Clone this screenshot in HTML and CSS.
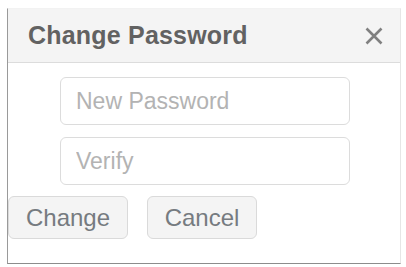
FILE: index.html
```html
<!DOCTYPE html>
<html>
<head>
<meta charset="utf-8">
<link rel="stylesheet" href="styles.css">
</head>
<body>
<div class="dialog">
  <div class="header">
    <span class="title">Change Password</span>
    <span class="close" aria-label="close">
      <svg width="18" height="18" viewBox="0 0 18 18"><path d="M1.5 1.5 L16.5 16.5 M16.5 1.5 L1.5 16.5" stroke="#808080" stroke-width="2.6" stroke-linecap="butt" fill="none"/></svg>
    </span>
  </div>
  <div class="body">
    <div class="fields">
      <input class="field" type="password" placeholder="New Password">
      <input class="field" type="password" placeholder="Verify">
    </div>
    <div class="actions">
      <button class="btn btn-change">Change</button>
      <button class="btn btn-cancel">Cancel</button>
    </div>
  </div>
</div>
</body>
</html>
```
FILE: styles.css
```css
html, body {
  margin: 0;
  padding: 0;
  background: #fff;
}
body {
  font-family: "Liberation Sans", Arial, sans-serif;
  padding: 8px 0 0 7px;
}
.dialog {
  width: 392px;
  border-left: 1px solid #9a9a9a;
  border-right: 1px solid #e6e6e6;
  border-top: 1px solid #f2f2f2;
  border-bottom: 1px solid #8c8c8c;
  background: #fff;
}
.header {
  height: 53px;
  background: #f4f4f4;
  border-bottom: 1px solid #dcdcdc;
  display: flex;
  align-items: center;
  justify-content: space-between;
  padding: 0 17px 0 20px;
}
.title {
  font-size: 25px;
  font-weight: bold;
  color: #626262;
  letter-spacing: 0.2px;
}
.close {
  display: flex;
  width: 18px;
  height: 18px;
}
.body {
  padding: 14px 0 24px 0;
}
.fields {
  display: flex;
  flex-direction: column;
  gap: 12px;
  margin-left: 52px;
}
.field {
  box-sizing: border-box;
  width: 290px;
  height: 48px;
  border: 1px solid #dcdcdc;
  border-radius: 6px;
  padding: 0 0 0 15px;
  margin: 0;
  font-family: "Liberation Sans", Arial, sans-serif;
  font-size: 23px;
  color: #555;
  outline: none;
  background: #fff;
}
.field::placeholder {
  color: #b3b3b3;
}
.actions {
  display: flex;
  gap: 19px;
  margin-top: 11px;
}
.btn {
  box-sizing: border-box;
  height: 43px;
  border: 1px solid #dadada;
  border-radius: 6px;
  background: #f4f4f4;
  color: #767b80;
  font-family: "Liberation Sans", Arial, sans-serif;
  font-size: 24px;
  padding: 0;
  margin: 0;
}
.btn-change {
  width: 120px;
}
.btn-cancel {
  width: 110px;
}
```
